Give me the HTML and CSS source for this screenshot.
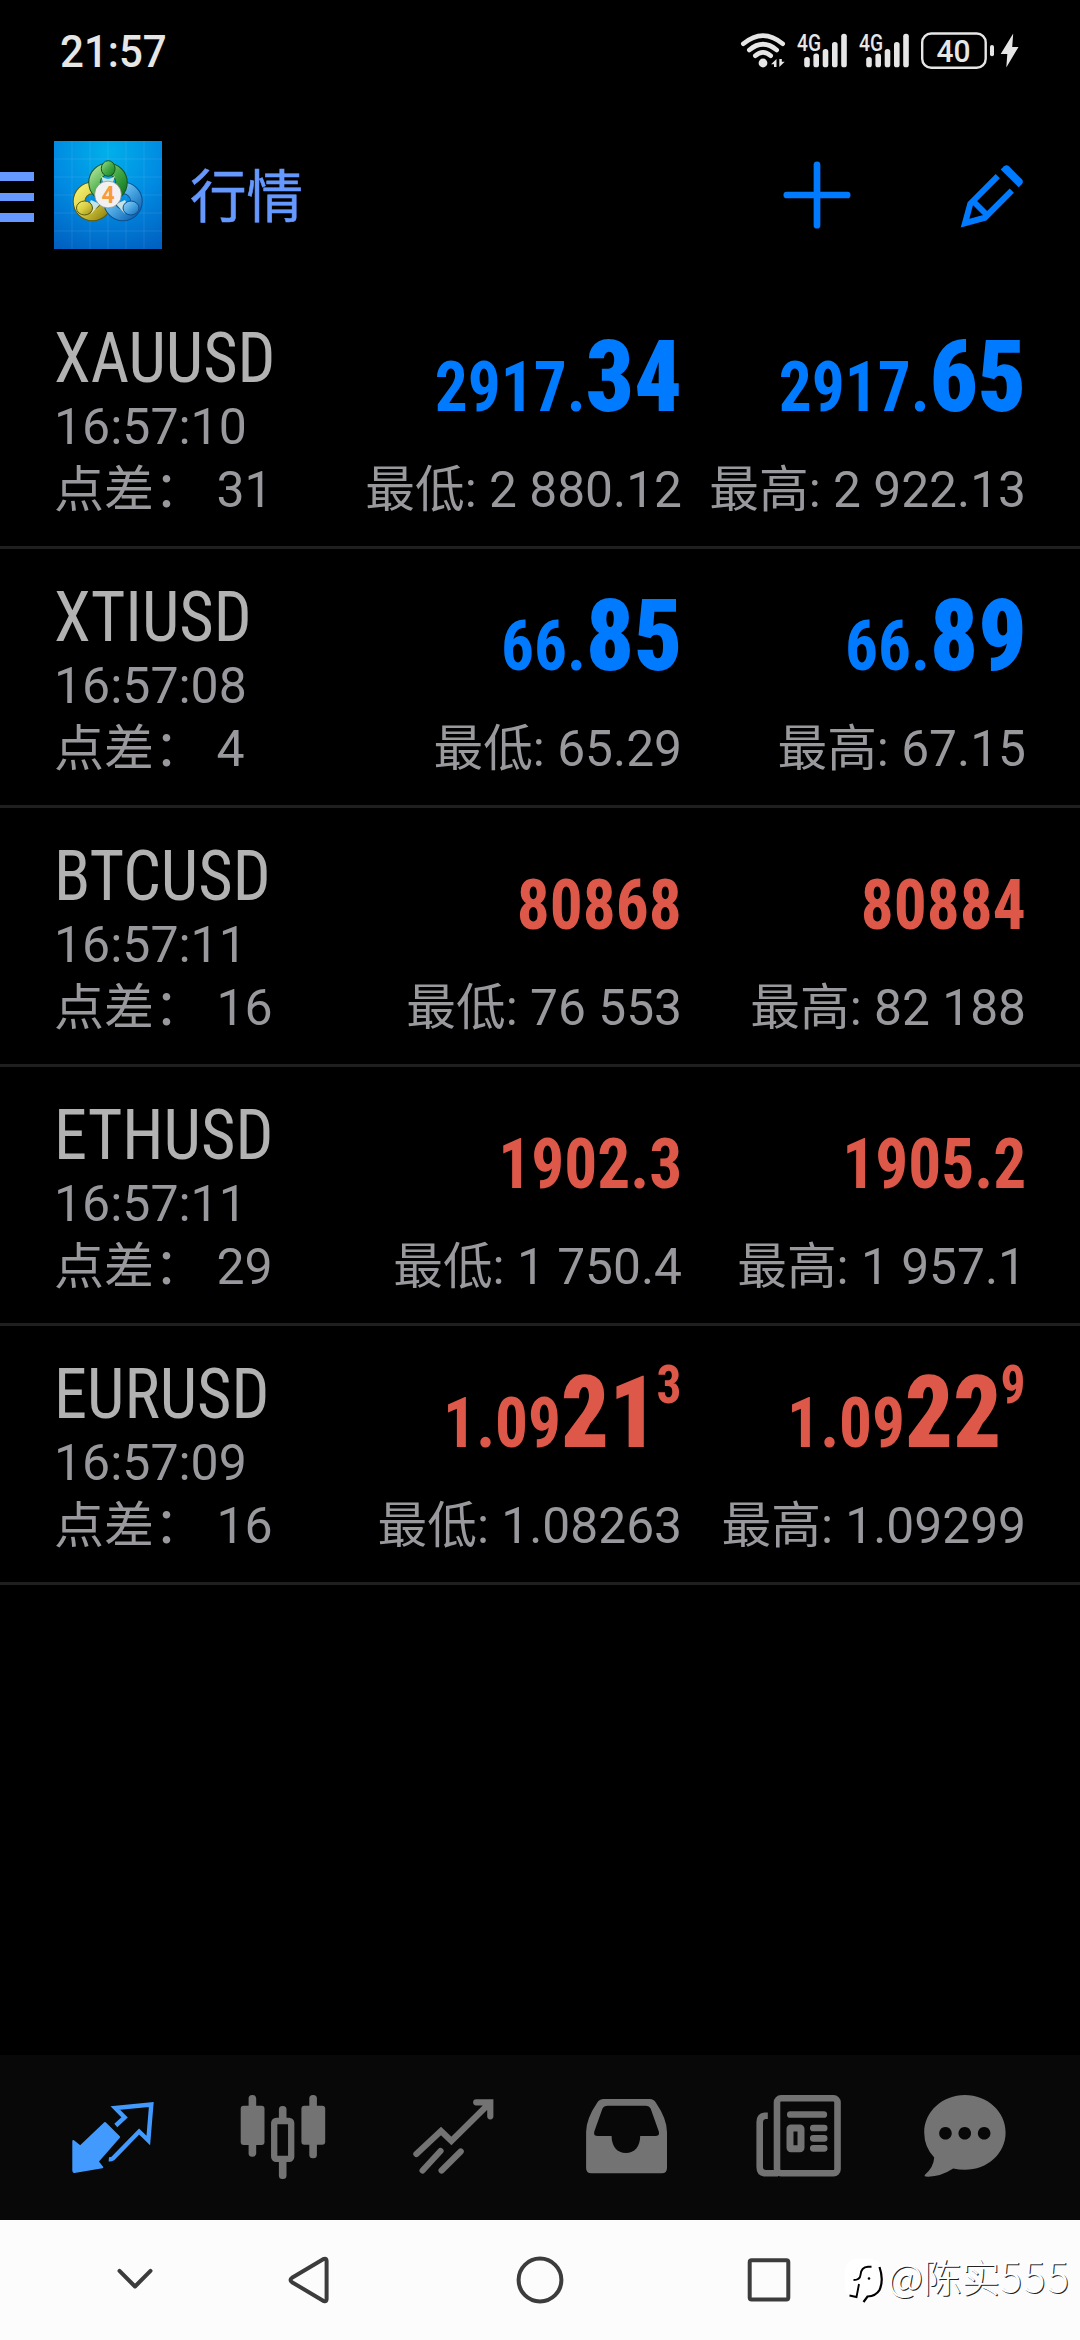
FILE: index.html
```html
<!DOCTYPE html>
<html lang="zh-CN">
<head>
<meta charset="utf-8">
<title>行情</title>
<link rel="stylesheet" href="styles.css">
</head>
<body>
<div class="screen">
  <div class="status-bar">
    <span class="clock">21:57</span>
    <svg class="status-icons" width="290" height="44" viewBox="735 30 290 44">
      <g fill="none" stroke="#e6e6e6" stroke-width="4.6" stroke-linecap="round">
        <path d="M743.3 43.8Q763 27.500 782.700 43.800"/>
        <path d="M749.300 50Q763 38.500 776.700 50"/>
        <path d="M755.300 55.800Q763 49 770.700 55.800"/>
      </g>
      <g fill="#e6e6e6">
        <circle cx="763" cy="63" r="4.400"/>
        <path d="M771 64.300L776.500 59V67H774V64.300ZM784.700 61.800L779.300 67V59H781.800V61.800Z"/>
        <text class="net" x="797" y="50.500" textLength="24" lengthAdjust="spacingAndGlyphs">4G</text>
        <rect x="804.200" y="57" width="5.600" height="10.300" rx="2.600"/>
        <rect x="813.400" y="53.500" width="5.600" height="13.800" rx="2.600"/>
        <rect x="822.700" y="49" width="5.600" height="18.300" rx="2.600"/>
        <rect x="832" y="42" width="5.600" height="25.300" rx="2.600"/>
        <rect x="841.200" y="33.700" width="5.600" height="33.600" rx="2.600"/>
        <text class="net" x="859" y="50.500" textLength="24" lengthAdjust="spacingAndGlyphs">4G</text>
        <rect x="866.200" y="57" width="5.600" height="10.300" rx="2.600"/>
        <rect x="875.400" y="53.500" width="5.600" height="13.800" rx="2.600"/>
        <rect x="884.700" y="49" width="5.600" height="18.300" rx="2.600"/>
        <rect x="894" y="42" width="5.600" height="25.300" rx="2.600"/>
        <rect x="903.200" y="33.700" width="5.600" height="33.600" rx="2.600"/>
        <text class="level" x="936.500" y="61.500" textLength="34" lengthAdjust="spacingAndGlyphs">40</text>
        <rect x="990" y="45" width="4" height="11.300" rx="2"/>
        <path d="M1013.200 33.500L1000.700 54H1007.300L1006.300 67.500L1018.500 47H1012.200Z"/>
      </g>
      <rect x="922.200" y="33.500" width="63.500" height="34.200" rx="9" fill="none" stroke="#e6e6e6" stroke-width="2.400"/>
    </svg>
  </div>

  <header class="app-bar">
    <div class="menu"><i></i><i></i><i></i></div>
    <svg class="logo" width="108" height="108" viewBox="0 0 108 108">
      <defs>
        <radialGradient id="bg" cx=".5" cy=".1" r="1"><stop offset="0" stop-color="#00b0ea"/><stop offset=".5" stop-color="#008be2"/><stop offset="1" stop-color="#0060c0"/></radialGradient>
        <linearGradient id="green" x2="1" y2="1"><stop offset="0" stop-color="#a5dc90"/><stop offset=".5" stop-color="#45ab45"/><stop offset="1" stop-color="#137827"/></linearGradient>
        <linearGradient id="yellow" x2="1" y2="1"><stop offset="0" stop-color="#f3ee70"/><stop offset=".5" stop-color="#d8cd40"/><stop offset="1" stop-color="#988b16"/></linearGradient>
        <linearGradient id="blue" x2="1" y2="1"><stop offset="0" stop-color="#9bd6f8"/><stop offset=".5" stop-color="#4aa6e2"/><stop offset="1" stop-color="#0f66b4"/></linearGradient>
      </defs>
      <rect width="108" height="108" fill="url(#bg)"/>
      <path d="M18 0V108M36 0V108M54 0V108M72 0V108M90 0V108M0 18H108M0 36H108M0 54H108M0 72H108M0 90H108" stroke="#fff" stroke-opacity=".1" stroke-width=".9"/>
      <g fill="none" stroke-width="10.500">
        <circle cx="38.500" cy="60.500" r="13.500" stroke="#5a5a12" stroke-width="12.500"/>
        <circle cx="38.500" cy="60.500" r="13.500" stroke="url(#yellow)"/>
        <circle cx="69" cy="60.500" r="13.500" stroke="#0c4f8f" stroke-width="12.500"/>
        <circle cx="69" cy="60.500" r="13.500" stroke="url(#blue)"/>
        <circle cx="54" cy="41.500" r="13.500" stroke="#14551f" stroke-width="12.500"/>
        <circle cx="54" cy="41.500" r="13.500" stroke="url(#green)"/>
      </g>
      <path d="M47 35Q54 41 61 35L58 44H50ZM37 59L46 63L37 73Q40 66 36 61ZM71 59L62 63L71 73Q68 66 72 61Z" fill="#e9f3e4" opacity=".85"/>
      <ellipse cx="54.200" cy="27.500" rx="6.900" ry="7.800" fill="url(#green)" stroke="#14551f"/>
      <ellipse cx="30.500" cy="67" rx="8" ry="7" fill="url(#yellow)" stroke="#5a5a12"/>
      <ellipse cx="77" cy="67" rx="8" ry="7" fill="url(#blue)" stroke="#0c4f8f"/>
      <circle cx="54" cy="53.500" r="13.400" fill="#f1f1f1" stroke="#777" stroke-width=".6"/>
      <text class="logo-num" x="54" y="62" text-anchor="middle">4</text>
    </svg>
    <h1 class="title">行情</h1>
    <svg class="add" width="72" height="72" viewBox="0 0 72 72"><path d="M36 5.800V66.200M5.800 36H66.200" stroke="#007aff" stroke-width="6.700" stroke-linecap="round"/></svg>
    <svg class="edit" width="72" height="72" viewBox="956 159 72 72">
      <g fill="none" stroke="#007aff" stroke-width="6">
        <path d="M997.800 176.200L970.300 203.700L965 223.200L984.800 217.700L1011.800 190.700M973 201L987 215"/>
      </g>
      <path d="M1000.700 169.600L1004 166.300Q1006.500 164.200 1009.200 166.600L1021.800 179.200Q1024 181.800 1021.800 184.200L1018.700 187.300Z" fill="#007aff"/>
    </svg>
  </header>

  <main class="quotes">
    <section class="quote up">
      <div class="info"><div class="symbol">XAUUSD</div><div class="time">16:57:10</div><div class="sub">点差： 31</div></div>
      <div class="price"><div class="value">2917.<b>34</b></div><div class="sub">最低: 2 880.12</div></div>
      <div class="price"><div class="value">2917.<b>65</b></div><div class="sub">最高: 2 922.13</div></div>
    </section>
    <section class="quote up">
      <div class="info"><div class="symbol">XTIUSD</div><div class="time">16:57:08</div><div class="sub">点差： 4</div></div>
      <div class="price"><div class="value">66.<b>85</b></div><div class="sub">最低: 65.29</div></div>
      <div class="price"><div class="value">66.<b>89</b></div><div class="sub">最高: 67.15</div></div>
    </section>
    <section class="quote down">
      <div class="info"><div class="symbol">BTCUSD</div><div class="time">16:57:11</div><div class="sub">点差： 16</div></div>
      <div class="price"><div class="value">80868</div><div class="sub">最低: 76 553</div></div>
      <div class="price"><div class="value">80884</div><div class="sub">最高: 82 188</div></div>
    </section>
    <section class="quote down">
      <div class="info"><div class="symbol">ETHUSD</div><div class="time">16:57:11</div><div class="sub">点差： 29</div></div>
      <div class="price"><div class="value">1902.3</div><div class="sub">最低: 1 750.4</div></div>
      <div class="price"><div class="value">1905.2</div><div class="sub">最高: 1 957.1</div></div>
    </section>
    <section class="quote down">
      <div class="info"><div class="symbol">EURUSD</div><div class="time">16:57:09</div><div class="sub">点差： 16</div></div>
      <div class="price"><div class="value">1.09<b>21</b><sup>3</sup></div><div class="sub">最低: 1.08263</div></div>
      <div class="price"><div class="value">1.09<b>22</b><sup>9</sup></div><div class="sub">最高: 1.09299</div></div>
    </section>
  </main>

  <nav class="tabs">
    <svg viewBox="66.700 2092 90 90">
      <path d="M73 2141L80 2146.500L104.700 2123L118.800 2137L97.300 2161.500L102 2167.300L74 2172Q73 2172 73 2170Z" fill="#429aff" stroke="#429aff" stroke-width="2" stroke-linejoin="round"/>
      <path d="M115.500 2125.500L124.300 2117.500L115 2108L151 2104.500L148 2140.500L138.800 2131.500L112.500 2158.500Q111 2159.500 108.500 2159.300" fill="none" stroke="#429aff" stroke-width="4.400"/>
    </svg>
    <svg viewBox="238 2092 90 90">
      <g fill="#737373">
        <rect x="248.600" y="2095" width="7.600" height="61.700" rx="3.500"/><rect x="240.700" y="2105.700" width="23.800" height="39.300" rx="3"/>
        <rect x="309.300" y="2095" width="7.600" height="63.300" rx="3.500"/><rect x="301.400" y="2105.700" width="23.800" height="39" rx="3"/>
        <rect x="278.900" y="2106" width="7.600" height="18" rx="3.500"/><rect x="278.900" y="2155" width="7.600" height="24" rx="3.500"/>
      </g>
      <rect x="274.200" y="2121" width="17" height="37.800" rx="2" fill="#080808" stroke="#737373" stroke-width="6.300"/>
    </svg>
    <svg viewBox="409.300 2092 90 90">
      <path d="M416.700 2154L441.300 2131L451.700 2141L490.500 2102.500M476.500 2102.300H490.600V2116.300M422.900 2170.500L440.800 2151M441.900 2170.500L461 2151.500" fill="none" stroke="#737373" stroke-width="6.200" stroke-linecap="round"/>
    </svg>
    <svg viewBox="580.700 2092 90 90">
      <path fill="#737373" fill-rule="evenodd" d="M603.500 2099H649.500Q653.500 2099 655.500 2102.500Q666.700 2119 666.700 2132V2168Q666.700 2173.300 661.500 2173.300H591Q585.800 2173.300 585.800 2168V2132Q585.800 2119 597 2102.500Q599 2099 603.500 2099ZM607.500 2105.700Q603.500 2105.700 602 2109L594 2131.500Q592.800 2136 597.500 2136H611.300C611.300 2146.500 617 2153 625.600 2153S639.900 2146.500 639.900 2136H655Q659.700 2136 658.500 2131.500L650.500 2109Q649 2105.700 645 2105.700Z"/>
    </svg>
    <svg viewBox="752 2092 90 90">
      <rect x="777" y="2098.300" width="60.500" height="75" rx="4" fill="none" stroke="#737373" stroke-width="6.600"/>
      <path d="M767.800 2115.800H765Q759.700 2116.500 759.700 2122V2167Q759.700 2173.300 766 2173.300H778" fill="none" stroke="#737373" stroke-width="6.600"/>
      <rect x="790" y="2128" width="11" height="20.700" rx="1" fill="none" stroke="#737373" stroke-width="7"/>
      <path d="M790.300 2114.500H823.800M813.300 2128H824.200M813.300 2138.300H824.200M813.300 2148.300H824.200" stroke="#737373" stroke-width="6.700" stroke-linecap="round"/>
    </svg>
    <svg viewBox="923.300 2092 90 90">
      <path fill="#737373" fill-rule="evenodd" d="M965.200 2095C987.600 2095 1005.900 2111.500 1005.900 2132.500S987.600 2169.800 965.200 2169.800Q959 2169.800 953.500 2168.600Q940 2177.500 926 2176.600Q924 2176 925.500 2174.500Q934 2167 934.500 2157.500Q924.500 2147 924.500 2132.500C924.500 2111.500 942.800 2095 965.200 2095ZM945.700 2127a6.300 6.300 0 1 0 .1 0ZM965 2127a6.300 6.300 0 1 0 .1 0ZM984.400 2127a6.300 6.300 0 1 0 .1 0Z"/>
    </svg>
  </nav>

  <div class="system-nav">
    <svg width="60" height="60" viewBox="0 0 60 60"><path d="M14.500 20.800L30 36.500L45.500 20.800"/></svg>
    <svg width="60" height="60" viewBox="0 0 60 60"><path d="M13 27.800L45 8.800Q47.600 8 47.600 11V49Q47.600 52 45 51.200L13 32.200Q10 30 13 27.800Z"/></svg>
    <svg width="60" height="60" viewBox="0 0 60 60"><circle cx="30" cy="30" r="21.400"/></svg>
    <svg width="60" height="60" viewBox="0 0 60 60"><rect x="10.700" y="10.200" width="38.600" height="39.300" rx="2"/></svg>
    <div class="watermark">
      <svg width="42" height="48" viewBox="843 2258 42 48">
        <path d="M857 2260H870Q882 2260 883 2274Q883 2300 865 2303L862 2299L846 2294Q843 2270 847 2265Q851 2260 857 2260Z" fill="#fff"/>
        <path d="M871.500 2267.700H868Q861 2268 860.500 2276Q860 2281 853.500 2281M859 2285L856.500 2298L849.500 2296.500" fill="none" stroke="#000" stroke-width="1.900"/>
        <path d="M879.500 2268Q884 2281 879.500 2291Q876 2297 867.500 2297.500L863.500 2303" fill="none" stroke="#000" stroke-width="2.200"/>
        <circle cx="869" cy="2279.500" r="1.300"/>
      </svg>
      <span>@陈实<em>555</em></span>
    </div>
  </div>
</div>
</body>
</html>
```
FILE: styles.css
```css
* { box-sizing: border-box; }
body { margin: 0; background: #000; }
.screen {
  width: 1080px;
  height: 2340px;
  display: flex;
  flex-direction: column;
  overflow: hidden;
  background: #000;
  font-family: Roboto, "Noto Sans CJK SC", sans-serif;
}

.status-bar {
  height: 100px;
  padding: 30px 55px 0 60px;
  display: flex;
  justify-content: space-between;
}
.clock {
  font-size: 45px;
  font-weight: 500;
  line-height: 44px;
  color: #e6e6e6;
  transform: scaleX(.935);
  transform-origin: left;
}
.net { font-size: 23px; font-weight: 500; }
.level { font-size: 32px; font-weight: 500; }

.app-bar {
  height: 190px;
  display: flex;
  align-items: center;
}
.menu { width: 34px; margin-top: 4px; display: flex; flex-direction: column; gap: 11.500px; }
.menu i { height: 8.800px; background: #6699ff; }
.logo { margin-left: 20px; }
.logo-num { font-size: 23px; font-weight: 700; fill: #f79b3c; }
.title {
  margin: 6px 0 0 28px;
  font-size: 56.500px;
  line-height: 80px;
  font-weight: 400;
  color: #6699ff;
  -webkit-text-stroke: .6px #6699ff;
}
.add { margin-left: auto; }
.edit { margin: 0 52px 0 103px; }

.quotes { flex: 1; }
.quote {
  height: 259px;
  padding: 32px 54px 0;
  display: grid;
  grid-template-columns: 1fr 344px 344px;
  border-bottom: 3px solid #1f1f1f;
}
.info, .price { white-space: nowrap; }
.price { display: flex; flex-direction: column; align-items: flex-end; }
.symbol {
  width: max-content;
  font: 400 70px/72px "Roboto Condensed", Roboto, sans-serif;
  color: #b2b2b2;
  transform: scaleX(.95);
  transform-origin: left;
}
.time, .sub { font-size: 50px; color: #98989d; }
.time { line-height: 66px; }
.sub { line-height: 60px; }
.price .sub { font-size: 49.700px; }
.value {
  margin-bottom: 8px;
  font: 700 70px/130px "Roboto Condensed", Roboto, sans-serif;
  transform: scaleX(.933);
  transform-origin: right;
}
.value b { font-size: 101px; line-height: 0; }
.value sup { margin-left: -1px; font-size: 53px; line-height: 0; vertical-align: 44px; }
.up .value { color: #007aff; }
.down .value { color: #de5849; }

.tabs {
  height: 165px;
  padding: 37px 26px 0;
  display: grid;
  grid-template-columns: repeat(6, 1fr);
  justify-items: center;
  background: #080808;
}
.tabs svg { width: 90px; height: 90px; }

.system-nav {
  position: relative;
  height: 120px;
  display: grid;
  grid-template-columns: 269px 80px 382px 76px 1fr;
  align-items: center;
  justify-items: center;
  background: #fcfcfc;
}
.system-nav > svg { fill: none; stroke: #3c3c3c; stroke-width: 4; stroke-linecap: round; stroke-linejoin: round; }
.watermark {
  position: absolute;
  left: 843px;
  top: 37px;
  display: flex;
  align-items: flex-start;
  gap: 3px;
  color: #fff;
}
.watermark span {
  margin-top: -11px;
  font: 300 38.500px/56px "Noto Sans CJK SC", sans-serif;
  text-shadow: 1px 1px 0 #222;
}
.watermark em { font-style: normal; font-size: 41px; letter-spacing: 1.500px; }
```
